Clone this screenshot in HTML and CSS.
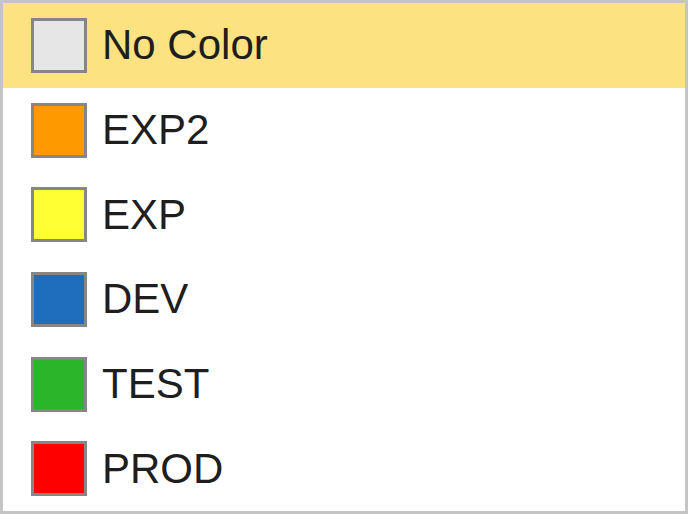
FILE: index.html
```html
<!DOCTYPE html>
<html lang="en">

<head>
    <title>Color</title>
    <meta charset="UTF-8">
    <link rel="stylesheet" href="styles.css">
</head>

<body>
    <ul class="colorlist">
        <li class="item selected"><span class="swatch none"></span>No Color</li>
        <li class="item"><span class="swatch exp2"></span>EXP2</li>
        <li class="item"><span class="swatch exp"></span>EXP</li>
        <li class="item"><span class="swatch dev"></span>DEV</li>
        <li class="item"><span class="swatch test"></span>TEST</li>
        <li class="item"><span class="swatch prod"></span>PROD</li>
    </ul>
</body>

</html>
```

FILE: styles.css
```css
html,
body {
    margin: 0px;
    padding: 0px;
    background-color: #fff;
}

.colorlist {
    list-style: none;
    margin: 0;
    padding: 0;
    width: 688px;
    height: 514px;
    box-sizing: border-box;
    border: 3px solid #c4c4c4;
    display: flex;
    flex-direction: column;
    font-family: "Liberation Sans", Arial, sans-serif;
    font-size: 42px;
    color: #1e1e1e;
}

.item {
    flex: 1;
    display: flex;
    align-items: center;
    padding-left: 28px;
    gap: 15px;
}

.item.selected {
    background-color: #fde281;
}

.swatch {
    width: 56px;
    height: 55px;
    box-sizing: border-box;
    border: 3px solid #868686;
}

.none { background-color: #e6e6e6; }
.exp2 { background-color: #ff9900; }
.exp { background-color: #ffff33; }
.dev { background-color: #1f6dbd; }
.test { background-color: #2bb52b; }
.prod { background-color: #ff0000; }
```
